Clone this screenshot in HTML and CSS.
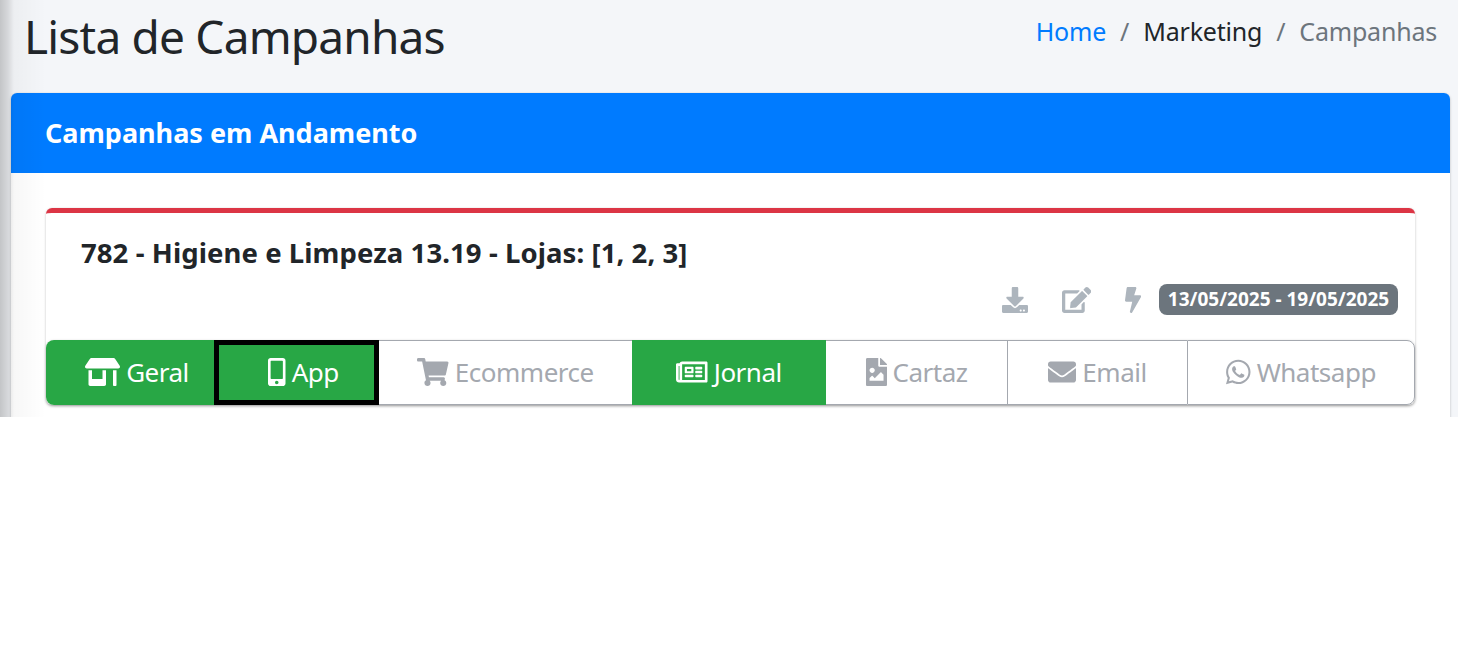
FILE: index.html
```html
<!DOCTYPE html>
<html lang="pt-BR">
<head>
  <meta charset="UTF-8">
  <title>Lista de Campanhas</title>
  <link rel="stylesheet" href="styles.css">
</head>
<body>
  <div class="wrapper">
    <div class="page-header">
      <h1>Lista de Campanhas</h1>
      <ol class="breadcrumb">
        <li><a href="#">Home</a></li>
        <li class="sep">/</li>
        <li>Marketing</li>
        <li class="sep">/</li>
        <li class="current">Campanhas</li>
      </ol>
    </div>

    <div class="card">
      <div class="card-header">Campanhas em Andamento</div>
      <div class="card-body">
        <div class="campaign">
          <div class="campaign-title">782 - Higiene e Limpeza 13.19 - Lojas: [1, 2, 3]</div>
          <div class="campaign-actions">
            <svg class="action" viewBox="0 0 512 512"><path d="M216 0h80c13.3 0 24 10.7 24 24v168h87.7c17.8 0 26.7 21.5 14.1 34.1L269.7 378.3c-7.5 7.5-19.8 7.5-27.3 0L90.1 226.1c-12.6-12.6-3.7-34.1 14.1-34.1H192V24c0-13.3 10.7-24 24-24zm296 376v112c0 13.3-10.7 24-24 24H24c-13.3 0-24-10.7-24-24V376c0-13.3 10.7-24 24-24h146.7l49 49c20.1 20.1 52.5 20.1 72.6 0l49-49H488c13.3 0 24 10.7 24 24zm-124 88c0-11-9-20-20-20s-20 9-20 20 9 20 20 20 20-9 20-20zm64 0c0-11-9-20-20-20s-20 9-20 20 9 20 20 20 20-9 20-20z"/></svg>
            <svg class="action" viewBox="0 0 576 512"><path d="M402.6 83.2l90.2 90.2c3.8 3.8 3.8 10 0 13.8L274.4 405.6l-92.8 10.3c-12.4 1.4-22.9-9.1-21.5-21.5l10.3-92.8L388.8 83.2c3.8-3.8 10-3.8 13.8 0zm162-22.9l-48.8-48.8c-15.2-15.2-39.9-15.2-55.2 0l-35.4 35.4c-3.8 3.8-3.8 10 0 13.8l90.2 90.2c3.8 3.8 10 3.8 13.8 0l35.4-35.4c15.2-15.3 15.2-40 0-55.2zM384 346.2V448H64V128h229.8c3.2 0 6.2-1.3 8.5-3.5l40-40c7.6-7.6 2.2-20.5-8.5-20.5H48C21.5 64 0 85.5 0 112v352c0 26.5 21.5 48 48 48h352c26.5 0 48-21.5 48-48V306.2c0-10.7-12.9-16-20.5-8.5l-40 40c-2.2 2.3-3.5 5.3-3.5 8.5z"/></svg>
            <svg class="action" viewBox="0 0 320 512"><path d="M296 160H180.6l42.6-129.8C227.2 15 215.7 0 200 0H56C44 0 33.8 8.9 32.2 20.8l-32 240C-1.7 275.2 9.5 288 24 288h118.7L96.6 482.5c-3.6 15.2 8 29.5 23.3 29.5 8.4 0 16.4-4.4 20.8-12l176-304c9.3-15.9-2.2-36-20.7-36z"/></svg>
            <span class="badge">13/05/2025 - 19/05/2025</span>
          </div>
          <div class="tabs">
            <a class="tab done shifted" href="#"><svg class="icon" viewBox="0 0 640 512"><path d="M320 384H128V224H64v256c0 17.7 14.3 32 32 32h256c17.7 0 32-14.3 32-32V224h-64v160zm314.6-241.8l-85.3-128c-6-8.9-16-14.2-26.7-14.2H117.4c-10.7 0-20.7 5.3-26.6 14.2l-85.3 128c-14.2 21.3 1 49.8 26.6 49.8H608c25.5 0 40.7-28.5 26.6-49.8zM512 496c0 8.8 7.2 16 16 16h32c8.8 0 16-7.2 16-16V224h-64v272z"/></svg>Geral</a>
            <a class="tab done shifted selected" href="#"><svg class="icon" viewBox="0 0 320 512"><path d="M272 0H48C21.5 0 0 21.5 0 48v416c0 26.5 21.5 48 48 48h224c26.5 0 48-21.5 48-48V48c0-26.5-21.5-48-48-48zM160 480c-17.7 0-32-14.3-32-32s14.3-32 32-32 32 14.3 32 32-14.3 32-32 32zm112-108c0 6.6-5.4 12-12 12H60c-6.6 0-12-5.4-12-12V60c0-6.6 5.4-12 12-12h200c6.6 0 12 5.4 12 12v312z"/></svg>App</a>
            <a class="tab" href="#"><svg class="icon" viewBox="0 0 576 512"><path d="M528.12 301.319l47.273-208C578.806 78.301 567.391 64 551.99 64H159.208l-9.166-44.81C147.758 8.021 137.93 0 126.529 0H24C10.745 0 0 10.745 0 24v16c0 13.255 10.745 24 24 24h69.883l70.248 343.435C147.325 417.1 136 435.222 136 456c0 30.928 25.072 56 56 56s56-25.072 56-56c0-15.674-6.447-29.835-16.824-40h209.647C430.447 426.165 424 440.326 424 456c0 30.928 25.072 56 56 56s56-25.072 56-56c0-22.172-12.888-41.332-31.579-50.405l5.517-24.276c3.413-15.018-8.002-29.319-23.403-29.319H218.117l-6.545-32h293.145c11.206 0 20.92-7.754 23.403-18.681z"/></svg>Ecommerce</a>
            <a class="tab done" href="#"><svg class="icon" viewBox="0 0 576 512"><path d="M552 64H112c-20.858 0-38.643 13.377-45.248 32H24c-13.255 0-24 10.745-24 24v272c0 30.928 25.072 56 56 56h496c13.255 0 24-10.745 24-24V88c0-13.255-10.745-24-24-24zM48 392V144h16v248c0 4.411-3.589 8-8 8s-8-3.589-8-8zm480 8H111.422c.374-2.614.578-5.283.578-8V112h416v288zM172 280h136c6.627 0 12-5.373 12-12v-96c0-6.627-5.373-12-12-12H172c-6.627 0-12 5.373-12 12v96c0 6.627 5.373 12 12 12zm28-80h80v40h-80v-40zm-40 140v-24c0-6.627 5.373-12 12-12h136c6.627 0 12 5.373 12 12v24c0 6.627-5.373 12-12 12H172c-6.627 0-12-5.373-12-12zm192 0v-24c0-6.627 5.373-12 12-12h104c6.627 0 12 5.373 12 12v24c0 6.627-5.373 12-12 12H364c-6.627 0-12-5.373-12-12zm0-144v-24c0-6.627 5.373-12 12-12h104c6.627 0 12 5.373 12 12v24c0 6.627-5.373 12-12 12H364c-6.627 0-12-5.373-12-12zm0 72v-24c0-6.627 5.373-12 12-12h104c6.627 0 12 5.373 12 12v24c0 6.627-5.373 12-12 12H364c-6.627 0-12-5.373-12-12z"/></svg>Jornal</a>
            <a class="tab" href="#"><svg class="icon" viewBox="0 0 384 512"><path d="M384 121.941V128H256V0h6.059a24 24 0 0 1 16.97 7.029l97.941 97.941a24.002 24.002 0 0 1 7.03 16.971zM248 160c-13.2 0-24-10.8-24-24V0H24C10.745 0 0 10.745 0 24v464c0 13.255 10.745 24 24 24h336c13.255 0 24-10.745 24-24V160H248zm-135.455 16c26.51 0 48 21.49 48 48s-21.49 48-48 48-48-21.49-48-48 21.491-48 48-48zm208 240h-256l.485-48.485L104.545 328c4.686-4.686 11.799-4.201 16.485.485L160.545 368 264.06 264.485c4.686-4.686 12.284-4.686 16.971 0L320.545 304v112z"/></svg>Cartaz</a>
            <a class="tab" href="#"><svg class="icon" viewBox="0 0 512 512"><path d="M502.3 190.8c3.9-3.1 9.7-.2 9.7 4.7V400c0 26.5-21.5 48-48 48H48c-26.5 0-48-21.5-48-48V195.6c0-5 5.7-7.8 9.7-4.7 22.4 17.4 52.1 39.5 154.1 113.6 21.1 15.4 56.7 47.8 92.2 47.6 35.7.3 72-32.8 92.3-47.6 102-74.1 131.6-96.3 154-113.7zM256 320c23.2.4 56.6-29.2 73.4-41.4 132.7-96.3 142.8-104.7 173.4-128.7 5.8-4.5 9.2-11.5 9.2-18.9v-19c0-26.5-21.5-48-48-48H48C21.5 64 0 85.5 0 112v19c0 7.4 3.4 14.3 9.2 18.9 30.6 23.9 40.7 32.4 173.4 128.7 16.8 12.2 50.2 41.8 73.4 41.4z"/></svg>Email</a>
            <a class="tab" href="#"><svg class="icon" viewBox="0 0 448 512"><path d="M380.9 97.1C339 55.1 283.2 32 223.9 32c-122.4 0-222 99.6-222 222 0 39.1 10.2 77.3 29.6 111L0 480l117.7-30.9c32.4 17.7 68.9 27 106.1 27h.1c122.3 0 224.1-99.6 224.1-222 0-59.3-25.2-115-67.1-157zm-157 341.6c-33.2 0-65.7-8.9-94-25.7l-6.7-4-69.8 18.3L72 359.2l-4.4-7c-18.5-29.4-28.2-63.3-28.2-98.2 0-101.7 82.8-184.5 184.6-184.5 49.3 0 95.6 19.2 130.4 54.1 34.8 34.9 56.2 81.2 56.1 130.5 0 101.8-84.9 184.6-186.6 184.6zm101.2-138.2c-5.5-2.8-32.8-16.2-37.9-18-5.1-1.9-8.8-2.8-12.5 2.8-3.7 5.6-14.3 18-17.6 21.8-3.2 3.7-6.5 4.2-12 1.4-32.6-16.3-54-29.1-75.5-66-5.7-9.8 5.7-9.1 16.3-30.3 1.8-3.7.9-6.9-.5-9.7-1.4-2.8-12.5-30.1-17.1-41.2-4.5-10.8-9.1-9.3-12.5-9.5-3.2-.2-6.9-.2-10.6-.2-3.7 0-9.7 1.4-14.8 6.9-5.1 5.6-19.4 19-19.4 46.3 0 27.3 19.9 53.7 22.6 57.4 2.8 3.7 39.1 59.7 94.8 83.8 35.2 15.2 49 16.5 66.6 13.9 10.7-1.6 32.8-13.4 37.4-26.4 4.6-13 4.6-24.1 3.2-26.4-1.3-2.5-5-3.9-10.5-6.6z"/></svg>Whatsapp</a>
          </div>
        </div>
      </div>
    </div>
  </div>
</body>
</html>
```

FILE: styles.css
```css
* {
  box-sizing: border-box;
}
body {
  margin: 0;
  background: white;
  font-family: "Noto Sans", sans-serif;
  color: #212529;
}
.wrapper {
  position: relative;
  height: 417px;
  overflow: hidden;
  background: #f4f6f9;
  padding-left: 11px;
  padding-right: 8px;
}
/* sombra do menu lateral, que fica fora da tela */
.wrapper::after {
  content: "";
  position: absolute;
  top: 0;
  bottom: 0;
  left: 0;
  width: 46px;
  background: linear-gradient(90deg, rgba(0, 0, 0, 0.2), rgba(0, 0, 0, 0.12) 8px, rgba(0, 0, 0, 0.03) 14px, transparent 46px);
  pointer-events: none;
}
.page-header {
  height: 93px;
  display: flex;
  justify-content: space-between;
  padding: 0 13px 0 13px;
}
h1 {
  margin: 6px 0 0;
  font-size: 46px;
  line-height: 60px;
  font-weight: 400;
  letter-spacing: -0.8px;
}
.breadcrumb {
  list-style: none;
  display: flex;
  gap: 14px;
  margin: 13px 0 0;
  padding: 0;
  font-size: 25px;
  line-height: 36px;
  letter-spacing: -0.2px;
}
.breadcrumb a {
  color: #007bff;
  text-decoration: none;
}
.breadcrumb .sep,
.breadcrumb .current {
  color: #6c757d;
}
.card {
  background: white;
  border-radius: 6px;
  box-shadow: 0 0 1px rgba(0, 0, 0, 0.125), 0 1px 3px rgba(0, 0, 0, 0.2);
}
.card-header {
  height: 80px;
  background: #007bff;
  border-radius: 6px 6px 0 0;
  color: white;
  font-size: 27px;
  font-weight: 700;
  line-height: 79px;
  padding-left: 34px;
}
.card-body {
  padding: 35px;
}
.campaign {
  border-top: 5px solid #dc3545;
  border-radius: 6px;
  box-shadow: 0 0 1px rgba(0, 0, 0, 0.125), 0 1px 3px rgba(0, 0, 0, 0.2);
}
.campaign-title {
  font-size: 27.5px;
  font-weight: 700;
  line-height: 40px;
  padding: 20px 35px 0;
  letter-spacing: 0.08px;
}
.campaign-actions {
  display: flex;
  align-items: center;
  justify-content: flex-end;
  height: 31px;
  margin-top: 11px;
  padding-right: 17px;
}
.action {
  height: 26px;
  fill: #adb5bd;
  margin-right: 34px;
}
.action:nth-child(3) {
  margin-right: 18px;
}
.badge {
  background: #6c757d;
  color: white;
  font-size: 19px;
  font-weight: 700;
  height: 31px;
  width: 239px;
  line-height: 31px;
  text-align: center;
  border-radius: 8px;
}
.tabs {
  display: grid;
  grid-template-columns: 168px 165px 253px 194px 181px 180px 228px;
  height: 65px;
  margin-top: 25px;
  border-radius: 8px;
  box-shadow: 0 1px 3px rgba(0, 0, 0, 0.25);
}
.tab {
  display: flex;
  align-items: center;
  justify-content: center;
  gap: 6px;
  padding-bottom: 1px;
  font-size: 26px;
  letter-spacing: -0.5px;
  color: #a4a8af;
  text-decoration: none;
  border: 1px solid #a4a8af;
  border-right: 0;
}
.tab.done + .tab:not(.done) {
  border-left: 0;
}
.tab:last-child {
  border-right: 1px solid #a4a8af;
  border-radius: 0 8px 8px 0;
}
.tab.done {
  background: #28a745;
  border: 0;
  color: white;
}
.tab.shifted {
  padding-left: 14px;
}
.tab:first-child {
  border-radius: 8px 0 0 8px;
}
.tab.selected {
  border: 5px solid black;
}
.icon {
  height: 28px;
  fill: currentColor;
}
```
